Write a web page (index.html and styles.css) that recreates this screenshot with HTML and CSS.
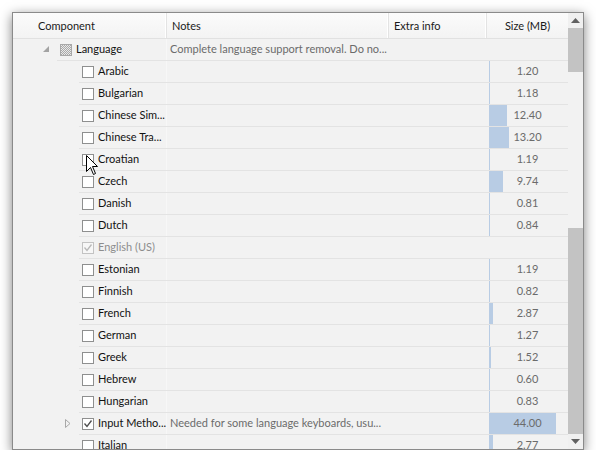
FILE: index.html
```html
<!DOCTYPE html>
<html>
<head>
<meta charset="utf-8">
<link rel="stylesheet" href="styles.css">
</head>
<body>
<div class="window">
  <div class="grid">
    <div class="header">
      <div class="hcell hcomp">Component</div>
      <div class="hcell">Notes</div>
      <div class="hcell">Extra info</div>
      <div class="hcell hsize">Size (MB)</div>
    </div>
    <div class="body">
      <div class="row">
        <div class="cell comp"><span class="exp"><svg width="6" height="6" viewBox="0 0 6 6"><polygon points="6,0 6,6 0,6" class="tri-fill"/></svg></span><div class="inner"><span class="cb mixed"></span><span class="name">Language</span></div></div>
        <div class="cell notes">Complete language support removal. Do no...</div>
        <div class="cell"></div>
        <div class="cell size"></div>
      </div>
      <div class="row child">
        <div class="cell comp"><span class="exp"></span><div class="inner"><span class="cb"></span><span class="name">Arabic</span></div></div>
        <div class="cell notes"></div><div class="cell"></div>
        <div class="cell size"><span class="bar" style="width:1px"></span><span class="val">1.20</span></div>
      </div>
      <div class="row child">
        <div class="cell comp"><span class="exp"></span><div class="inner"><span class="cb"></span><span class="name">Bulgarian</span></div></div>
        <div class="cell notes"></div><div class="cell"></div>
        <div class="cell size"><span class="bar" style="width:1px"></span><span class="val">1.18</span></div>
      </div>
      <div class="row child">
        <div class="cell comp"><span class="exp"></span><div class="inner"><span class="cb"></span><span class="name">Chinese Sim...</span></div></div>
        <div class="cell notes"></div><div class="cell"></div>
        <div class="cell size"><span class="bar" style="width:18px"></span><span class="val">12.40</span></div>
      </div>
      <div class="row child">
        <div class="cell comp"><span class="exp"></span><div class="inner"><span class="cb"></span><span class="name">Chinese Tra...</span></div></div>
        <div class="cell notes"></div><div class="cell"></div>
        <div class="cell size"><span class="bar" style="width:20px"></span><span class="val">13.20</span></div>
      </div>
      <div class="row child">
        <div class="cell comp"><span class="exp"></span><div class="inner"><span class="cb"></span><span class="name">Croatian</span></div></div>
        <div class="cell notes"></div><div class="cell"></div>
        <div class="cell size"><span class="bar" style="width:1px"></span><span class="val">1.19</span></div>
      </div>
      <div class="row child">
        <div class="cell comp"><span class="exp"></span><div class="inner"><span class="cb"></span><span class="name">Czech</span></div></div>
        <div class="cell notes"></div><div class="cell"></div>
        <div class="cell size"><span class="bar" style="width:14px"></span><span class="val">9.74</span></div>
      </div>
      <div class="row child">
        <div class="cell comp"><span class="exp"></span><div class="inner"><span class="cb"></span><span class="name">Danish</span></div></div>
        <div class="cell notes"></div><div class="cell"></div>
        <div class="cell size"><span class="bar" style="width:1px"></span><span class="val">0.81</span></div>
      </div>
      <div class="row child">
        <div class="cell comp"><span class="exp"></span><div class="inner"><span class="cb"></span><span class="name">Dutch</span></div></div>
        <div class="cell notes"></div><div class="cell"></div>
        <div class="cell size"><span class="bar" style="width:1px"></span><span class="val">0.84</span></div>
      </div>
      <div class="row child">
        <div class="cell comp"><span class="exp"></span><div class="inner"><span class="cb dis"><svg width="10" height="10" viewBox="0 0 10 10"><polyline points="1.5,4.5 4,7.5 8.5,1.5" class="chk"/></svg></span><span class="name disabled">English (US)</span></div></div>
        <div class="cell notes"></div><div class="cell"></div>
        <div class="cell size"></div>
      </div>
      <div class="row child">
        <div class="cell comp"><span class="exp"></span><div class="inner"><span class="cb"></span><span class="name">Estonian</span></div></div>
        <div class="cell notes"></div><div class="cell"></div>
        <div class="cell size"><span class="bar" style="width:1px"></span><span class="val">1.19</span></div>
      </div>
      <div class="row child">
        <div class="cell comp"><span class="exp"></span><div class="inner"><span class="cb"></span><span class="name">Finnish</span></div></div>
        <div class="cell notes"></div><div class="cell"></div>
        <div class="cell size"><span class="bar" style="width:1px"></span><span class="val">0.82</span></div>
      </div>
      <div class="row child">
        <div class="cell comp"><span class="exp"></span><div class="inner"><span class="cb"></span><span class="name">French</span></div></div>
        <div class="cell notes"></div><div class="cell"></div>
        <div class="cell size"><span class="bar" style="width:4px"></span><span class="val">2.87</span></div>
      </div>
      <div class="row child">
        <div class="cell comp"><span class="exp"></span><div class="inner"><span class="cb"></span><span class="name">German</span></div></div>
        <div class="cell notes"></div><div class="cell"></div>
        <div class="cell size"><span class="bar" style="width:1px"></span><span class="val">1.27</span></div>
      </div>
      <div class="row child">
        <div class="cell comp"><span class="exp"></span><div class="inner"><span class="cb"></span><span class="name">Greek</span></div></div>
        <div class="cell notes"></div><div class="cell"></div>
        <div class="cell size"><span class="bar" style="width:2px"></span><span class="val">1.52</span></div>
      </div>
      <div class="row child">
        <div class="cell comp"><span class="exp"></span><div class="inner"><span class="cb"></span><span class="name">Hebrew</span></div></div>
        <div class="cell notes"></div><div class="cell"></div>
        <div class="cell size"><span class="bar" style="width:1px"></span><span class="val">0.60</span></div>
      </div>
      <div class="row child">
        <div class="cell comp"><span class="exp"></span><div class="inner"><span class="cb"></span><span class="name">Hungarian</span></div></div>
        <div class="cell notes"></div><div class="cell"></div>
        <div class="cell size"><span class="bar" style="width:1px"></span><span class="val">0.83</span></div>
      </div>
      <div class="row child">
        <div class="cell comp"><span class="exp"><svg width="6" height="9" viewBox="0 0 6 9"><polygon points="0.5,0.5 5,4.5 0.5,8.5" class="tri-line"/></svg></span><div class="inner"><span class="cb"><svg width="10" height="10" viewBox="0 0 10 10"><polyline points="1.5,4.5 4,7.5 8.5,1.5" class="chk"/></svg></span><span class="name">Input Metho...</span></div></div>
        <div class="cell notes">Needed for some language keyboards, usu...</div><div class="cell"></div>
        <div class="cell size"><span class="bar" style="width:67px"></span><span class="val">44.00</span></div>
      </div>
      <div class="row child">
        <div class="cell comp"><span class="exp"></span><div class="inner"><span class="cb"></span><span class="name">Italian</span></div></div>
        <div class="cell notes"></div><div class="cell"></div>
        <div class="cell size"><span class="bar" style="width:4px"></span><span class="val">2.77</span></div>
      </div>
    </div>
  </div>
  <div class="scrollbar">
    <div class="sb-btn"><svg width="9" height="5" viewBox="0 0 9 5"><polygon points="4.5,0 9,5 0,5" class="arrow"/></svg></div>
    <div class="sb-track sb-pre"></div>
    <div class="sb-thumb"></div>
    <div class="sb-track sb-rest"></div>
    <div class="sb-btn"><svg width="9" height="5" viewBox="0 0 9 5"><polygon points="0,0 9,0 4.5,5" class="arrow"/></svg></div>
  </div>
  <svg class="cursor" width="13" height="21" viewBox="0 0 13 21"><path d="M0.5,0.5 L0.5,16.5 L4.5,12.5 L7.5,19.5 L9.5,18.5 L6.5,11.5 L11.5,11.5 Z" fill="#fff" stroke="#000" stroke-width="1"/></svg>
</div>
</body>
</html>
```
FILE: styles.css
```css
html, body {
  margin: 0;
  background: #ffffff;
}
body {
  font-family: Lato, "Liberation Sans", Arial, sans-serif;
  font-size: 11px;
  color: #1a1a1a;
}
.window {
  position: relative;
  margin: 12px 0 0 12px;
  width: 570px;
  height: 436px;
  border: 1px solid #8a8a8a;
  box-shadow: 0 3px 11px rgba(0, 0, 0, 0.5);
  background: #f2f2f2;
  display: flex;
  overflow: hidden;
}
.grid {
  flex: 1;
  display: flex;
  flex-direction: column;
  overflow: hidden;
}
.header {
  display: grid;
  grid-template-columns: 154px 222px 98px 81px;
  height: 26px;
  box-sizing: border-box;
  border-bottom: 1px solid #e1e1e1;
  background: linear-gradient(#fbfbfb, #f3f3f3);
  flex: none;
}
.hcell {
  display: flex;
  align-items: center;
  padding-left: 5px;
  padding-bottom: 1px;
  border-right: 1px solid #e3e3e3;
  box-shadow: inset -1px 0 #ffffff;
  white-space: nowrap;
  color: #1a1a1a;
}
.hcomp {
  padding-left: 25px;
}
.hsize {
  justify-content: center;
  padding-left: 0;
  border-right: none;
  box-shadow: none;
}
.body {
  flex: 1;
  overflow: hidden;
}
.row {
  display: grid;
  grid-template-columns: 154px 222px 98px 81px;
  height: 22px;
}
.cell {
  display: flex;
  align-items: center;
  min-width: 0;
  overflow: hidden;
  white-space: nowrap;
  border-bottom: 1px solid #e3e3e3;
  box-sizing: border-box;
  padding-bottom: 2px;
}
.cell.comp {
  border-bottom: none;
  padding-bottom: 0;
  padding-left: 30px;
  overflow: visible;
  box-shadow: inset -1px 0 #f7f7f7;
}
.row.child .cell.comp {
  padding-left: 52px;
}
.exp {
  width: 14px;
  flex: none;
  display: flex;
  align-items: center;
  padding-bottom: 2px;
}
.tri-fill {
  fill: #a3a3a3;
}
.tri-line {
  fill: none;
  stroke: #a8a8a8;
  stroke-width: 1;
}
.inner {
  flex: 1;
  height: 100%;
  box-sizing: border-box;
  border-bottom: 1px solid #e3e3e3;
  padding-bottom: 2px;
  display: flex;
  align-items: center;
  gap: 4px;
  padding-left: 3px;
  min-width: 0;
}
.cb {
  width: 12px;
  height: 12px;
  box-sizing: border-box;
  border: 1px solid #8e8f8f;
  background: #ffffff;
  flex: none;
  display: flex;
  align-items: center;
  justify-content: center;
  margin-top: 2px;
}
.cb.mixed {
  background-color: #e6e6e6;
  background-image: repeating-conic-gradient(#a9a9a9 0 25%, #e9e9e9 0 50%);
  background-size: 2px 2px;
  border-color: #a8a8a8;
}
.cb.dis {
  border-color: #c3c3c3;
  background: #f7f7f7;
}
.chk {
  fill: none;
  stroke: #4d4d4d;
  stroke-width: 1.3;
}
.cb.dis .chk {
  stroke: #b8b8b8;
}
.name {
  color: #111111;
}
.name.disabled {
  color: #8d8d8d;
}
.notes {
  padding-left: 3px;
  color: #6b6b6b;
}
.size {
  display: grid;
  align-items: stretch;
  padding-bottom: 0;
}
.bar {
  grid-area: 1 / 1;
  justify-self: start;
  margin-left: 2px;
  background: #b8cce4;
}
.val {
  grid-area: 1 / 1;
  align-self: center;
  justify-self: center;
  color: #6b6b6b;
  padding-bottom: 2px;
}
.scrollbar {
  width: 15px;
  flex: none;
  display: flex;
  flex-direction: column;
}
.sb-btn {
  height: 15px;
  flex: none;
  background: #f0f0f0;
  display: flex;
  align-items: center;
  justify-content: center;
}
.arrow {
  fill: #606060;
}
.sb-track {
  background: #c3c3c3;
}
.sb-pre {
  height: 44px;
  flex: none;
}
.sb-thumb {
  height: 156px;
  flex: none;
  background: #f2f2f2;
}
.sb-rest {
  flex: 1;
}
.cursor {
  position: absolute;
  left: 73px;
  top: 142px;
}
```
